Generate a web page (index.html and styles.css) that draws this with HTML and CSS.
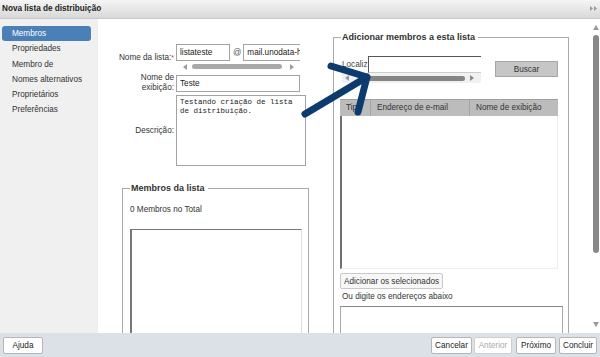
FILE: index.html
```html
<!DOCTYPE html>
<html lang="pt-BR">
<head>
  <meta charset="UTF-8" />
  <title>Nova lista de distribuição</title>
  <link rel="stylesheet" href="styles.css">
</head>
<body>
  <div class="dialog">
    <div class="titlebar">
      <span>Nova lista de distribuição</span>
      <svg class="expand" width="7" height="5" viewBox="0 0 7 5"><path d="M0 0 L3 2.5 L0 5 Z M4 0 L7 2.5 L4 5 Z" fill="#9a9a9a"/></svg>
    </div>

    <div class="content">
      <ul class="menu">
        <li class="active">Membros</li>
        <li>Propriedades</li>
        <li>Membro de</li>
        <li>Nomes alternativos</li>
        <li>Proprietários</li>
        <li>Preferências</li>
      </ul>

      <div class="main">
        <div class="col-left">
          <div class="form">
            <label class="lbl">Nome da lista:<span class="req">*</span></label>
            <div class="clip">
              <div class="line">
                <input type="text" class="in-name" value="listateste" />
                <span class="at">@</span>
                <input type="text" class="in-domain" value="mail.unodata-hosting.com.br" />
              </div>
              <div class="hscroll">
                <svg class="arr" width="4" height="6" viewBox="0 0 4 6"><path d="M4 0 L0 3 L4 6 Z" fill="#9c9c9c"/></svg>
                <div class="thumb thumb-name"></div>
                <svg class="arr" width="4" height="6" viewBox="0 0 4 6"><path d="M0 0 L4 3 L0 6 Z" fill="#9c9c9c"/></svg>
              </div>
            </div>

            <label class="lbl">Nome de<br>exibição:</label>
            <input type="text" class="in-display" value="Teste" />

            <label class="lbl">Descrição:</label>
            <textarea class="desc">Testando criação de lista de distribuição.</textarea>
          </div>

          <fieldset class="members">
            <legend>Membros da lista</legend>
            <div class="total">0 Membros no Total</div>
            <div class="memberbox"></div>
          </fieldset>
        </div>

        <fieldset class="add">
          <legend>Adicionar membros a esta lista</legend>
          <div class="locate">
            <div class="clip2">
              <div class="line">
                <span class="loc-lbl">Localiz</span>
                <input type="text" class="in-search" value="" />
              </div>
              <div class="hscroll hscroll2">
                <svg class="arr" width="4" height="6" viewBox="0 0 4 6"><path d="M4 0 L0 3 L4 6 Z" fill="#9c9c9c"/></svg>
                <div class="thumb thumb-search"></div>
                <svg class="arr" width="4" height="6" viewBox="0 0 4 6"><path d="M0 0 L4 3 L0 6 Z" fill="#8a8a8a"/></svg>
              </div>
            </div>
            <button class="btn-search">Buscar</button>
          </div>

          <div class="results">
            <div class="rhead">
              <div class="c c-type">Tipo</div>
              <div class="c c-mail">Endereço de e-mail</div>
              <div class="c c-name">Nome de exibição</div>
            </div>
            <div class="rbody"></div>
          </div>

          <button class="btn-add">Adicionar os selecionados</button>
          <div class="hint">Ou digite os endereços abaixo</div>
          <textarea class="addresses"></textarea>
        </fieldset>
      </div>

      <div class="vscroll">
        <svg width="6" height="5" viewBox="0 0 6 5"><path d="M0 5 L3 0 L6 5 Z" fill="#9a9a9a"/></svg>
        <div class="vthumb"></div>
        <div class="spacer"></div>
        <svg width="6" height="5" viewBox="0 0 6 5"><path d="M0 0 L3 5 L6 0 Z" fill="#9a9a9a"/></svg>
      </div>
    </div>

    <div class="footer">
      <button class="btn b-help">Ajuda</button>
      <div class="spacer"></div>
      <button class="btn b-cancel">Cancelar</button>
      <button class="btn b-prev" disabled>Anterior</button>
      <button class="btn b-next">Próximo</button>
      <button class="btn b-done">Concluir</button>
    </div>

    <svg class="pointer" width="600" height="357" viewBox="0 0 600 357">
      <path d="M305 114 L367 77 M331 66 L367 77 L358 112" fill="none" stroke="#0c3b6d" stroke-width="7" stroke-linecap="round" stroke-linejoin="round"/>
    </svg>
  </div>
</body>
</html>
```

FILE: styles.css
```css
body {
  margin: 0;
  font-family: "Liberation Sans", Arial, sans-serif;
  font-size: 8.2px;
  color: #333;
}

.dialog {
  position: relative;
  width: 600px;
  height: 357px;
  display: flex;
  flex-direction: column;
  overflow: hidden;
  background: #fff;
}

.titlebar {
  height: 19px;
  flex: none;
  box-sizing: border-box;
  display: flex;
  align-items: center;
  justify-content: space-between;
  padding: 0 3px 1px 2px;
  background: linear-gradient(#f5f5f5, #d8d8d8);
  border-bottom: 1px solid #c8c8c8;
  font-weight: bold;
  color: #222;
}

.content {
  flex: 1;
  display: flex;
  min-height: 0;
}

/* menu lateral */
.menu {
  width: 98px;
  flex: none;
  margin: 0;
  padding: 7px 0 0;
  list-style: none;
  background: #f0f0f0;
}

.menu li {
  height: 15.3px;
  line-height: 15.3px;
  margin: 0 7px 0 2px;
  padding-left: 10px;
  border-radius: 3px;
}

.menu li.active {
  background: #4a80b7;
  color: #fff;
}

.main {
  flex: 1;
  display: flex;
  overflow: hidden;
}

.col-left {
  width: 222px;
  flex: none;
  padding-top: 25px;
}

.form {
  display: grid;
  grid-template-columns: 76px auto;
  column-gap: 2px;
  row-gap: 2px;
  align-items: center;
}

.lbl {
  text-align: right;
  line-height: 10px;
}

.req {
  color: #d33;
  vertical-align: top;
  font-size: 7px;
}

input, textarea {
  font: inherit;
  color: #222;
  box-sizing: border-box;
  border: 1px solid #a3a3a3;
  border-radius: 0;
  outline: none;
  margin: 0;
}

input {
  height: 17px;
  padding: 0 3px;
}

.clip {
  width: 124px;
  overflow: hidden;
}

.line {
  display: flex;
  align-items: center;
  white-space: nowrap;
}

.in-name {
  width: 54px;
  flex: none;
}

.at {
  margin: 0 2px 0 3px;
  color: #555;
}

.in-domain {
  width: 90px;
  flex: none;
}

.hscroll {
  height: 9px;
  margin-top: 1px;
  display: flex;
  align-items: center;
  padding-left: 7px;
}

.thumb {
  height: 5px;
  border-radius: 3px;
  background: #a8a8a8;
}

.thumb-name {
  width: 90px;
  margin: 0 8px 0 5px;
}

.in-display {
  width: 124px;
}

.desc {
  width: 130px;
  height: 71px;
  padding: 2px 3px;
  resize: none;
  overflow: hidden;
  font-family: "Liberation Mono", monospace;
  font-size: 7.5px;
  line-height: 9px;
  color: #222;
}

fieldset {
  margin: 0;
  min-width: 0;
  box-sizing: border-box;
  border: 1px solid #aaa;
}

legend {
  font-size: 9px;
  font-weight: bold;
  line-height: 12px;
  padding: 0 3px 0 1px;
  color: #333;
}

.members {
  width: 187px;
  margin: 16px 0 0 24px;
  padding: 0 6px 0 7px;
}

.total {
  margin-top: 11px;
  line-height: 10px;
}

.memberbox {
  margin-top: 14px;
  height: 130px;
  border: 1px solid #e2e2e2;
  border-top-color: #777;
  border-left: 2px solid #777;
}

/* adicionar membros */
.add {
  width: 236px;
  height: 420px;
  flex: none;
  align-self: flex-start;
  margin: 12px 0 0 13px;
  padding: 0 10px 0 6px;
}

.add legend {
  margin-left: 1px;
}

.locate {
  display: flex;
  align-items: flex-start;
  margin-top: 13px;
}

.clip2 {
  width: 139px;
  margin-left: 2px;
  overflow: hidden;
  flex: none;
}

.loc-lbl {
  width: 26px;
  flex: none;
  color: #444;
}

.in-search {
  width: 124px;
  flex: none;
  height: 17px;
  border-color: #ccc;
  border-top-color: #555;
  border-left-color: #555;
}

.hscroll2 {
  height: 10px;
  margin-top: 0;
  padding-left: 3px;
  background: #f1f1f1;
}

.thumb-search {
  width: 97px;
  margin: 0 5px 0 19px;
  background: #858585;
}

.btn-search {
  font: inherit;
  width: 66px;
  height: 16px;
  margin: 5px 0 0 14px;
  padding: 0;
  background: #c6c6c6;
  border: 1px solid #a6a6a6;
  color: #333;
}

.results {
  width: 218px;
  margin-top: 16px;
}

.rhead {
  display: flex;
  height: 17px;
  background: #bcbcbc;
  border-top: 1px solid #a0a0a0;
  box-sizing: border-box;
}

.c {
  line-height: 16px;
  padding-left: 6px;
  overflow: hidden;
  white-space: nowrap;
  box-sizing: border-box;
  color: #333;
}

.c-type {
  width: 31px;
  border-right: 1px solid #a4a4a4;
}

.c-mail {
  width: 99px;
  border-right: 1px solid #a4a4a4;
}

.c-name {
  flex: 1;
}

.rbody {
  height: 153px;
  box-sizing: border-box;
  border-left: 2px solid #707070;
  border-right: 1px solid #eee;
  border-bottom: 1px solid #eee;
}

.btn-add {
  display: block;
  font: inherit;
  height: 16px;
  margin-top: 4px;
  padding: 0 3px;
  background: #f7f7f7;
  border: 1px solid #c9c9c9;
  border-radius: 2px;
  color: #333;
}

.hint {
  margin-top: 3px;
  padding-left: 2px;
  line-height: 10px;
}

.addresses {
  display: block;
  width: 223px;
  height: 60px;
  margin-top: 4px;
  resize: none;
  border-color: #aaa;
  border-top-color: #888;
}

/* barra de rolagem */
.vscroll {
  width: 11px;
  flex: none;
  display: flex;
  flex-direction: column;
  align-items: center;
  padding: 6px 0 6px 2px;
  box-sizing: border-box;
}

.vthumb {
  width: 6px;
  height: 218px;
  margin-top: 5px;
  border-radius: 3px;
  background: #888;
}

.spacer {
  flex: 1;
}

.footer {
  height: 24px;
  flex: none;
  display: flex;
  align-items: center;
  padding: 0 3px;
  background: #dce0e7;
}

.btn {
  font: inherit;
  height: 17px;
  padding: 0;
  background: #fff;
  border: 1px solid #b6b6b6;
  border-radius: 2px;
  color: #222;
}

.btn:disabled {
  color: #aaa;
  border-color: #cfcfcf;
}

.b-help { width: 40px; }
.b-cancel { width: 41px; }
.b-prev { width: 38px; margin-left: 2px; }
.b-next { width: 40px; margin-left: 4px; }
.b-done { width: 38px; margin-left: 3px; }

.pointer {
  position: absolute;
  top: 0;
  left: 0;
  pointer-events: none;
}
```
